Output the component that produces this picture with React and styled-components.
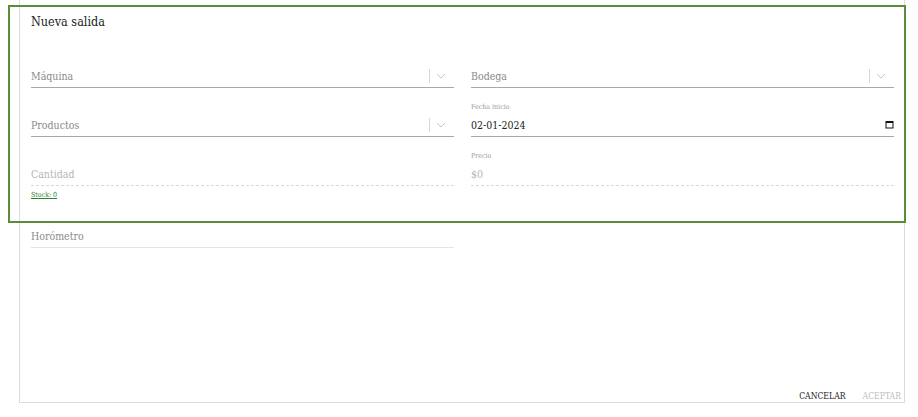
import React from 'react';
import styled, { createGlobalStyle } from 'styled-components';

const GlobalStyle = createGlobalStyle`
  body {
    margin: 0;
    background: #fff;
    font-family: "DejaVu Serif Condensed", "DejaVu Serif", serif;
  }
`;

const Page = styled.div`
  position: relative;
  width: 918px;
  height: 417px;
`;

const Panel = styled.div`
  box-sizing: border-box;
  margin-left: 19px;
  width: 886px;
  height: 403px;
  border: 1px solid #dcdcdc;
  border-top: none;
  display: flex;
  flex-direction: column;
  padding: 14px 10px 0 11px;
`;

const Title = styled.h2`
  margin: 0;
  font-size: 12.5px;
  font-weight: 400;
  color: #222;
  line-height: 16px;
`;

const Grid = styled.div`
  display: grid;
  grid-template-columns: 423px 423px;
  column-gap: 17px;
  align-items: start;
  margin-top: 9px;
`;

const Field = styled.div`
  display: flex;
  flex-direction: column;
  justify-content: flex-end;
  height: 49px;
`;

const SmallLabel = styled.div`
  font-size: 7px;
  color: #9a9a9a;
  margin-bottom: 2px;
`;

const Control = styled.div`
  display: flex;
  align-items: center;
  height: 23px;
  border-bottom: 1px ${p => (p.$dashed ? 'dashed' : 'solid')} ${p => p.$line || '#a8a8a8'};
  font-size: 10.5px;
  color: ${p => (p.$filled ? '#222' : p.$muted ? '#b5b5b5' : '#8a8a8a')};
`;

const Value = styled.span`
  flex: 1;
`;

const Indicator = styled.div`
  display: flex;
  align-items: center;
  gap: 6px;
  padding-right: 8px;
`;

const Separator = styled.span`
  width: 1px;
  height: 14px;
  background: #d6d6d6;
`;

const Helper = styled.a`
  display: block;
  margin-top: 5px;
  font-size: 7px;
  color: #2e7d32;
  text-decoration: underline;
`;

const Footer = styled.div`
  margin-top: auto;
  display: flex;
  justify-content: flex-end;
  gap: 13px;
  margin-right: -9px;
`;

const Button = styled.button`
  background: none;
  border: none;
  padding: 1px 2px 1px;
  font-family: inherit;
  font-size: 8.6px;
  text-transform: uppercase;
  color: ${p => (p.disabled ? '#bdbdbd' : '#222')};
`;

const Highlight = styled.div`
  position: absolute;
  left: 8px;
  top: 5px;
  width: 898px;
  height: 218px;
  box-sizing: border-box;
  border: 2.5px solid #5b8c3a;
  pointer-events: none;
`;

const Chevron = () => (
  <svg width="10" height="6" viewBox="0 0 10 6" fill="none" stroke="#c8c8c8" strokeWidth="1">
    <path d="M1 1l4 4 4-4" />
  </svg>
);

const Calendar = () => (
  <svg width="9" height="9" viewBox="0 0 9 9" fill="none">
    <rect x="1" y="1.5" width="7" height="6.5" stroke="#111" strokeWidth="1" />
    <rect x="1" y="1" width="7" height="2" fill="#111" />
  </svg>
);

const SelectField = ({ label }) => (
  <Field>
    <Control>
      <Value>{label}</Value>
      <Indicator>
        <Separator />
        <Chevron />
      </Indicator>
    </Control>
  </Field>
);

export default function App() {
  return (
    <>
      <GlobalStyle />
      <Page>
        <Panel>
          <Title>Nueva salida</Title>
          <Grid>
            <SelectField label="Máquina" />
            <SelectField label="Bodega" />
            <SelectField label="Productos" />
            <Field>
              <SmallLabel>Fecha inicio</SmallLabel>
              <Control $filled>
                <Value>02-01-2024</Value>
                <Calendar />
              </Control>
            </Field>
            <div>
              <Field>
                <Control $dashed $line="#d8d8d8" $muted>
                  <Value>Cantidad</Value>
                </Control>
              </Field>
              <Helper>Stock: 0</Helper>
            </div>
            <Field>
              <SmallLabel>Precio</SmallLabel>
              <Control $dashed $line="#d8d8d8" $muted>
                <Value>$0</Value>
              </Control>
            </Field>
            <Field>
              <Control $line="#e4e4e4">
                <Value>Horómetro</Value>
              </Control>
            </Field>
          </Grid>
          <Footer>
            <Button>Cancelar</Button>
            <Button disabled>Aceptar</Button>
          </Footer>
        </Panel>
        <Highlight />
      </Page>
    </>
  );
}
